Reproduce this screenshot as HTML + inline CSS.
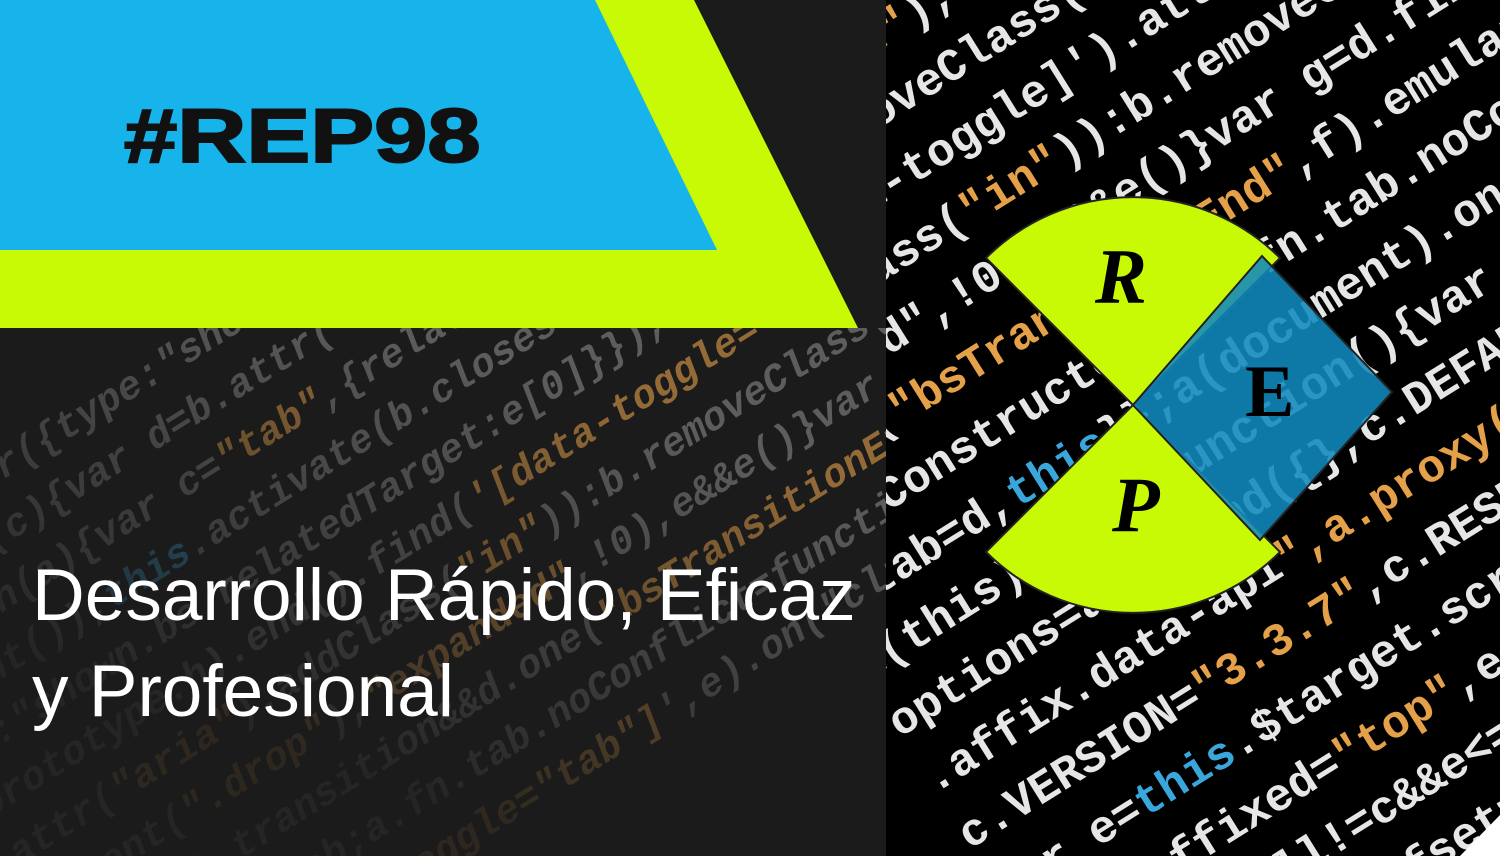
<!DOCTYPE html>
<html><head><meta charset="utf-8"><style>
html,body{margin:0;padding:0;overflow:hidden;width:1500px;height:856px}
body{position:relative;background:#1b1b1b;font-family:"Liberation Sans",sans-serif}
.code{position:absolute;font-family:"Liberation Mono",monospace;white-space:pre;transform-origin:0 0}
.r{position:absolute;left:886px;top:0;width:614px;height:856px;background:#000;overflow:hidden}
.l{position:absolute;left:0;top:328px;width:886px;height:528px;overflow:hidden}
.o{color:#e5a04a}.b{color:#3aa7dc}
</style></head><body>
<div class="l"><div class="code" style="left:-250px;top:200px;transform:rotate(-32deg);font-size:40px;line-height:56px;font-style:italic;font-weight:bold;color:#8a8a8a;opacity:.6">
t").trigger({type:"shown.bs.<span class="b">this</span>.element.elem
function(c){var d=b.attr(<span class="o">"Target"</span>);if(d)).trigger
function(a){var c=<span class="o">"tab"</span>,{relatedTarget:e[0]}).activate(b.closest
prevent());<span class="b">this</span>.activate(b.closest(<span class="o">"li"</span>),c)})}})
type:"shown.bs.relatedTarget:e[0]}}),.find(<span class="o">'[data-toggle'</span>
c.prototype.h).end().find(<span class="o">'[data-toggle="tab"]'</span>).b.attr
a.attr(<span class="o">"aria"</span>).addClass(<span class="o">"in"</span>)):b.removeClass(<span class="o">"fade"</span>),
b.parent(<span class="o">".drop"</span>),<span class="o">"expanded"</span>,!0),e&&e()}var g=d.find
a.support.transition&&d.one(<span class="o">"bsTransitionEnd"</span>,f).emulate
var c=a.fn.tab;a.fn.tab.noConflict=function(){return
a(document).on(<span class="o">toggle="tab"]</span>',e).on("click"
</div>
<div style="position:absolute;left:0;top:0;width:886px;height:528px;background:linear-gradient(200deg,rgba(27,27,27,0) 20%,rgba(27,27,27,.85) 75%)"></div>
</div>
<div class="r"><div class="code" style="left:-360px;top:140px;transform:rotate(-32deg);font-size:46px;line-height:66px;font-weight:bold;color:#e6e6e6">
b.closest(<span class="o">"li"</span>),c),b.activate(b.closest(<span class="o">"li"</span>),c)
ctive").removeClass(<span class="o">"active"</span>).end().find(<span class="o">'[data</span>
ind('[data-toggle]').attr(<span class="o">"aria-expanded"</span>,!0),.active
,b.addClass(<span class="o">"in"</span>)):b.removeClass(<span class="o">"fade"</span>),b.parent(<span class="o">".dropdown"</span>)
expanded",!0),e&&e()}var g=d.find(<span class="o">"&gt; .active"</span>),h=e&amp;&amp;a.support
b.one(<span class="o">"bsTransitionEnd"</span>,f).emulateTransitionEnd(150)
tab.Constructor=c,a.fn.tab.noConflict=function(){return a.fn.tab
n.tab=d,<span class="b">this</span>}};a(document).on(<span class="o">'[data-toggle="tab"]'</span>,e).on(<span class="o">"click.bs.tab"</span>
a(this).each(function(){var d=a(<span class="b">this</span>),e=d.data(<span class="o">"bs.affix"</span>)
options=a.extend({},c.DEFAULTS,d),<span class="b">this</span>.$target=a(c.target)
.affix.data-api<span class="o">",a.proxy(this.checkPosition,this))</span>
c.VERSION=<span class="o">"3.3.7"</span>,c.RESET=<span class="o">"affix affix-top affix-bottom"</span>
var e=<span class="b">this</span>.$target.scrollTop(),f=<span class="b">this</span>.$element.offset()
<span class="b">this</span>.affixed=<span class="o">"top"</span>,e&lt;=c.top)&amp;&amp;<span class="o">"bottom"</span>:!(e+g&lt;=a-d)
return null!=c&amp;&amp;e&lt;=c?<span class="o">"top"</span>:.getPinnedOffset=function(){
<span class="b">this</span>.pinnedOffset=<span class="b">this</span>.$element.addClass(c.RESET).addClass
b.removeClass(c.RESET).addClass(<span class="o">"affix"</span>);var a=<span class="b">this</span>.$target
d.trigger(<span class="o">"affixed"</span>),a.fn.affix.Constructor=c,a.fn.affix
return this.each(function(){var b=a(<span class="b">this</span>),c=b.data()
</div></div>
<svg style="position:absolute;left:0;top:0" width="1500" height="856">
<polygon points="0,0 694,0 858,328 0,328" fill="#c8fa05"/>
<polygon points="0,0 595,0 717,250 0,250" fill="#16b4ea"/>
<path d="M1133,405 L986,258 A208,208 0 0 1 1280,258 Z" fill="#c8fa05" stroke="#222" stroke-width="2"/>
<path d="M1133,405 L1280,552 A208,208 0 0 1 986,552 Z" fill="#c8fa05" stroke="#222" stroke-width="2"/>
<polygon points="1133,405 1262,256 1392,392 1260,540" fill="#1089be" fill-opacity=".88" stroke="#222" stroke-width="2"/>
<polygon points="1460,856 1500,815 1500,856" fill="#fff"/>
</svg>
<div style="position:absolute;left:1095px;top:232px;font:bold 78px 'Liberation Serif',serif;font-style:italic;color:#000">R</div>
<div style="position:absolute;left:1112px;top:460px;font:bold 78px 'Liberation Serif',serif;font-style:italic;color:#000">P</div>
<div style="position:absolute;left:1245px;top:350px;font:bold 74px 'Liberation Serif',serif;color:#000">E</div>
<div style="position:absolute;left:124px;top:93px;font:900 76px 'Liberation Sans',sans-serif;color:#111;transform:scaleX(1.26);transform-origin:0 0;white-space:nowrap;-webkit-text-stroke:2px #111">#REP98</div>
<div style="position:absolute;left:32px;top:548px;font:400 73px/96px 'Liberation Sans',sans-serif;color:#fff;white-space:nowrap">Desarrollo Rápido, Eficaz<br>y Profesional</div>
</body></html>
